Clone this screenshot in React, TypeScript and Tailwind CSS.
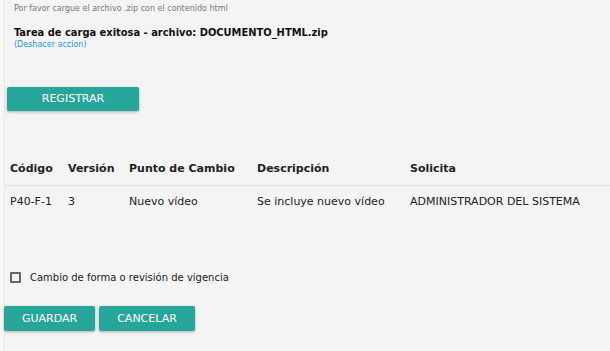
import React from 'react';

const rows = [
  { codigo: 'P40-F-1', version: '3', punto: 'Nuevo vídeo', descripcion: 'Se incluye nuevo vídeo', solicita: 'ADMINISTRADOR DEL SISTEMA' },
];

export default function App() {
  return (
    <div className="w-[610px] h-[351px] overflow-hidden bg-[#f7f7f7] font-['DejaVu_Sans',Verdana,sans-serif]">
      <div className="ml-[4px] h-full border-l border-[#e6e6e6] bg-[#f4f4f4]">
        {/* Carga */}
        <div className="pl-[9px] pt-[3px]">
          <p className="text-[8px] leading-[12px] text-[#777]">Por favor cargue el archivo .zip con el contenido html</p>
          <p className="mt-[11px] text-[11px] font-bold text-[#111] leading-[14px] font-['DejaVu_Sans_Condensed','DejaVu_Sans',sans-serif]">
            Tarea de carga exitosa - archivo: DOCUMENTO_HTML.zip
          </p>
          <a className="block text-[8px] text-[#2196f3] leading-[10px]">(Deshacer accion)</a>
        </div>

        <div className="pl-[2px] mt-[35px]">
          <button className="w-[132px] h-[24px] bg-[#26a69a] text-white text-[11px] rounded-[2px] shadow-[0_1px_3px_rgba(0,0,0,0.3)]">
            REGISTRAR
          </button>
        </div>

        {/* Tabla */}
        <table className="mt-[42px] w-full text-[11px] text-[#222] border-collapse">
          <thead>
            <tr className="border-b border-[#e0e0e0] text-left">
              <th className="pl-[5px] h-[32px] font-bold w-[63px]">Código</th>
              <th className="font-bold w-[61px]">Versión</th>
              <th className="font-bold w-[128px]">Punto de Cambio</th>
              <th className="font-bold w-[153px]">Descripción</th>
              <th className="font-bold">Solicita</th>
            </tr>
          </thead>
          <tbody>
            {rows.map(r => (
              <tr key={r.codigo}>
                <td className="pl-[5px] h-[34px]">{r.codigo}</td>
                <td>{r.version}</td>
                <td>{r.punto}</td>
                <td>{r.descripcion}</td>
                <td>{r.solicita}</td>
              </tr>
            ))}
          </tbody>
        </table>

        {/* Checkbox */}
        <label className="mt-[51px] flex items-center gap-[9px] pl-[5px] text-[10px] text-[#222]">
          <span className="w-[11px] h-[11px] border-2 border-[#666] rounded-[1px]" />
          Cambio de forma o revisión de vigencia
        </label>

        <div className="mt-[21px] flex gap-[4px] -ml-[1px]">
          <button className="w-[91px] h-[25px] bg-[#26a69a] text-white text-[11px] rounded-[2px] shadow-[0_1px_3px_rgba(0,0,0,0.3)]">
            GUARDAR
          </button>
          <button className="w-[96px] h-[25px] bg-[#26a69a] text-white text-[11px] rounded-[2px] shadow-[0_1px_3px_rgba(0,0,0,0.3)]">
            CANCELAR
          </button>
        </div>
      </div>
    </div>
  );
}
